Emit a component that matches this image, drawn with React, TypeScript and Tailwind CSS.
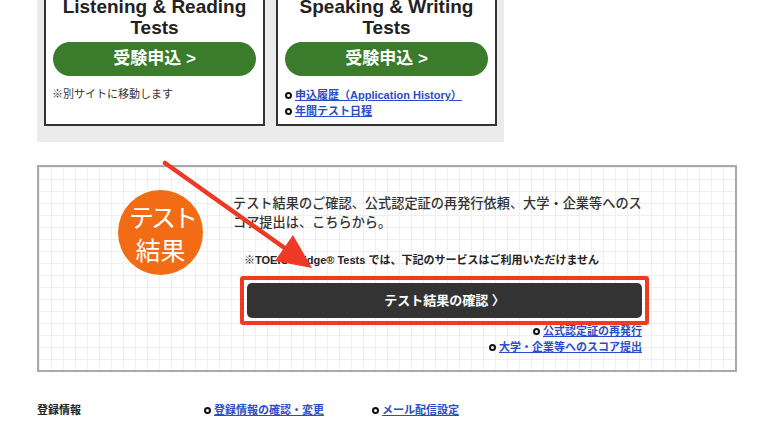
import React from 'react';

const font = "font-['Liberation_Sans','Noto_Sans_CJK_JP',sans-serif]";

const Bullet = () => (
  <span className="inline-block w-[7px] h-[7px] rounded-full border-[2px] border-[#111] mr-[3px] shrink-0" />
);

const LinkItem = ({ children }: { children: React.ReactNode }) => (
  <div className="flex items-center">
    <Bullet />
    <a href="#" className="text-[#2b4cc8] underline font-bold text-[11px] leading-[16px]">
      {children}
    </a>
  </div>
);

const TestCard = ({ title, children }: { title: string; children: React.ReactNode }) => (
  <div className="flex-1 bg-white border-[2px] border-[#333] pt-[8px] px-[7px] pb-[5px]">
    <div className="text-center text-[19px] leading-[21px] font-bold text-[#222]">
      {title}
      <br />
      Tests
    </div>
    <button className="mt-[4px] w-full h-[34px] rounded-full bg-[#3a7c2b] text-white text-[17px] font-bold">
      受験申込 &gt;
    </button>
    <div className="mt-[11px]">{children}</div>
  </div>
);

const Arrow = () => (
  <svg className="absolute left-0 top-0 pointer-events-none" width="780" height="425">
    <line x1="165" y1="163" x2="286" y2="249" stroke="#ee3a24" strokeWidth="4.5" strokeLinecap="round" />
    <polygon points="312,268 275,261 293,235" fill="#ee3a24" />
  </svg>
);

export default function App() {
  return (
    <div className={`relative w-[780px] h-[425px] overflow-hidden bg-white text-[#333] ${font}`}>
      <div className="pl-[37px]">
        {/* application panel */}
        <div className="w-[467px] -mt-[14px] bg-[#ebebeb] px-[7px] pb-[16px] flex gap-[11px]">
          <TestCard title="Listening & Reading">
            <p className="text-[11px] leading-[14px] text-[#333] -ml-[1px]">※別サイトに移動します</p>
          </TestCard>
          <TestCard title="Speaking & Writing">
            <LinkItem>申込履歴（Application History）</LinkItem>
            <LinkItem>年間テスト日程</LinkItem>
          </TestCard>
        </div>

        {/* test results */}
        <div className="mt-[23px] w-[700px] h-[207px] border-[2px] border-[#a9a9a9] bg-white bg-[linear-gradient(#efefef_1px,transparent_1px),linear-gradient(90deg,#efefef_1px,transparent_1px)] bg-[size:12px_12px] flex items-start">
          <div className="ml-[79px] mt-[23px] w-[85px] h-[85px] rounded-full bg-[#f26b15] text-white flex flex-col items-center justify-center text-[25px] leading-[33px] font-['Noto_Sans_CJK_JP',sans-serif]">
            <span className="tracking-[-0.12em] -mr-[0.12em]">テスト</span>
            <span>結果</span>
          </div>
          <div className="ml-[30px] mt-[27px] w-[416px]">
            <p className="text-[13.2px] leading-[19px] text-[#333] font-medium w-[424px]">
              テスト結果のご確認、公式認定証の再発行依頼、大学・企業等へのス
              <br />
              コア提出は、こちらから。
            </p>
            <p className="mt-[21px] ml-[11px] text-[11px] leading-[14px] font-bold text-[#222]">
              ※TOEIC Bridge® Tests では、下記のサービスはご利用いただけません
            </p>
            <div className="mt-[9px] ml-[7px] border-[4px] border-[#f23a1e] rounded-[3px] p-[3px]">
              <button className="w-full h-[35px] rounded-[5px] bg-[#333] text-white text-[13px] font-bold">
                テスト結果の確認 〉
              </button>
            </div>
            <div className="-mt-[2px] pr-[7px] flex flex-col items-end">
              <LinkItem>公式認定証の再発行</LinkItem>
              <LinkItem>大学・企業等へのスコア提出</LinkItem>
            </div>
          </div>
        </div>

        {/* registration */}
        <div className="mt-[30px] flex items-center text-[11px] leading-[14px]">
          <span className="w-[167px] font-bold text-[#222]">登録情報</span>
          <div className="w-[168px]">
            <LinkItem>登録情報の確認・変更</LinkItem>
          </div>
          <LinkItem>メール配信設定</LinkItem>
        </div>
      </div>
      <Arrow />
    </div>
  );
}
